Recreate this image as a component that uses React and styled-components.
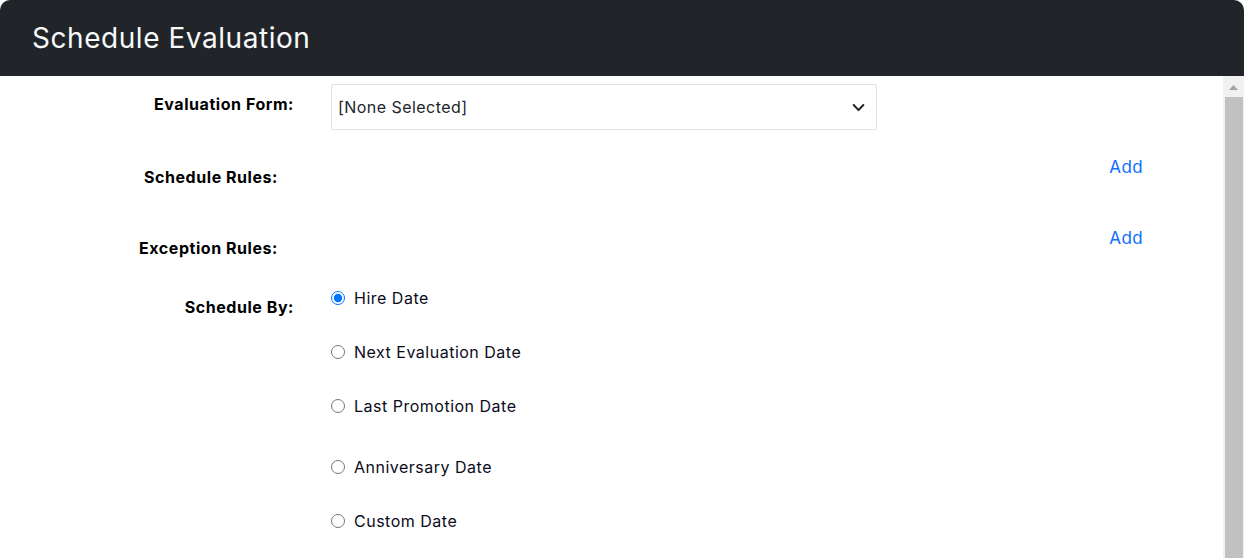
import React, { useState } from "react";
import styled, { createGlobalStyle } from "styled-components";

const GlobalStyle = createGlobalStyle`
  html, body {
    margin: 0;
    padding: 0;
    height: 100%;
    overflow: hidden;
    background: #ffffff;
  }
  body {
    font-family: Inter, "Noto Sans", Arial, sans-serif;
    color: #212529;
  }
`;

const Modal = styled.div`
  display: flex;
  flex-direction: column;
  width: 100%;
  height: 100vh;
  border-radius: 10px 10px 0 0;
  overflow: hidden;
  background: #fff;
`;

const Header = styled.header`
  flex: 0 0 76px;
  display: flex;
  align-items: center;
  padding: 0 32px;
  background: #212529;
  color: #f8f9fa;
  font-size: 28px;
  font-weight: 400;
  letter-spacing: 0.55px;
`;

const Body = styled.div`
  flex: 1;
  display: flex;
  min-height: 0;
`;

const Content = styled.div`
  flex: 1;
  display: flex;
  flex-direction: column;
  padding: 8px 80px 0 0;
  overflow: hidden;
`;

/* scrollbar of the modal body, as it shows in the capture */
const ScrollTrack = styled.div`
  flex: 0 0 21px;
  display: flex;
  flex-direction: column;
  background: #f1f1f1;
`;

const ScrollArrow = styled.svg`
  display: block;
  margin: 9px 0 0 6px;
`;

const ScrollThumb = styled.div`
  flex: 1;
  margin: 7px 1px 0 2px;
  background: #c1c1c1;
`;

const Row = styled.div`
  display: grid;
  grid-template-columns: 294px 1fr;
  column-gap: 37px;
  align-items: start;
  min-height: ${(p) => p.height || 0}px;
  margin-top: ${(p) => p.top || 0}px;
`;

const Label = styled.label`
  padding-top: ${(p) => p.offset || 0}px;
  padding-right: ${(p) => p.inset || 0}px;
  text-align: right;
  font-size: 16px;
  line-height: 22px;
  font-weight: 700;
  letter-spacing: 0.55px;
  color: #000;
  white-space: nowrap;
`;

const SelectWrap = styled.div`
  position: relative;
  width: 546px;
`;

const Select = styled.select`
  appearance: none;
  width: 100%;
  height: 46px;
  padding: 0 36px 0 6px;
  border: 1px solid #dee2e6;
  border-radius: 2px;
  background: #fff;
  font-family: inherit;
  font-size: 16px;
  letter-spacing: 0.45px;
  color: #212529;
  outline: none;
`;

const Chevron = styled.svg`
  position: absolute;
  right: 12px;
  top: 17px;
  pointer-events: none;
`;

const Actions = styled.div`
  display: flex;
  justify-content: flex-end;
`;

const AddLink = styled.a`
  font-size: 17px;
  line-height: 22px;
  letter-spacing: 0.4px;
  color: #0d6efd;
  text-decoration: none;
  cursor: pointer;
`;

const RadioList = styled.div`
  display: flex;
  flex-direction: column;
`;

const Option = styled.label`
  display: flex;
  align-items: center;
  gap: 9px;
  height: 22px;
  margin-top: ${(p) => p.spacing || 0}px;
  font-size: 16px;
  letter-spacing: 0.5px;
  color: #0b0b1a;
  cursor: pointer;

  input {
    width: 14px;
    height: 14px;
    margin: 0;
  }
`;

const options = [
  { id: "hire", text: "Hire Date", spacing: 0 },
  { id: "next", text: "Next Evaluation Date", spacing: 32 },
  { id: "promo", text: "Last Promotion Date", spacing: 32 },
  { id: "anniv", text: "Anniversary Date", spacing: 39 },
  { id: "custom", text: "Custom Date", spacing: 32 },
];

export default function App() {
  const [scheduleBy, setScheduleBy] = useState("hire");

  return (
    <>
      <GlobalStyle />
      <Modal>
        <Header>Schedule Evaluation</Header>
        <Body>
          <Content>
            <Row top={0}>
              <Label offset={9}>Evaluation Form:</Label>
              <SelectWrap>
                <Select defaultValue="">
                  <option value="">[None Selected]</option>
                </Select>
                <Chevron width="13" height="13" viewBox="0 0 16 16">
                  <path
                    d="M2 5l6 6 6-6"
                    fill="none"
                    stroke="#212529"
                    strokeWidth="2.4"
                    strokeLinecap="round"
                    strokeLinejoin="round"
                  />
                </Chevron>
              </SelectWrap>
            </Row>

            <Row top={26} height={71}>
              <Label offset={10} inset={16}>Schedule Rules:</Label>
              <Actions>
                <AddLink>Add</AddLink>
              </Actions>
            </Row>

            <Row height={60}>
              <Label offset={10} inset={16}>Exception Rules:</Label>
              <Actions>
                <AddLink>Add</AddLink>
              </Actions>
            </Row>

            <Row>
              <Label offset={9}>Schedule By:</Label>
              <RadioList>
                {options.map((o) => (
                  <Option key={o.id} spacing={o.spacing}>
                    <input
                      type="radio"
                      name="scheduleBy"
                      checked={scheduleBy === o.id}
                      onChange={() => setScheduleBy(o.id)}
                    />
                    {o.text}
                  </Option>
                ))}
              </RadioList>
            </Row>
          </Content>
          <ScrollTrack>
            <ScrollArrow width="9" height="5" viewBox="0 0 9 5">
              <path d="M4.5 0L9 5H0z" fill="#a3a3a3" />
            </ScrollArrow>
            <ScrollThumb />
          </ScrollTrack>
        </Body>
      </Modal>
    </>
  );
}
